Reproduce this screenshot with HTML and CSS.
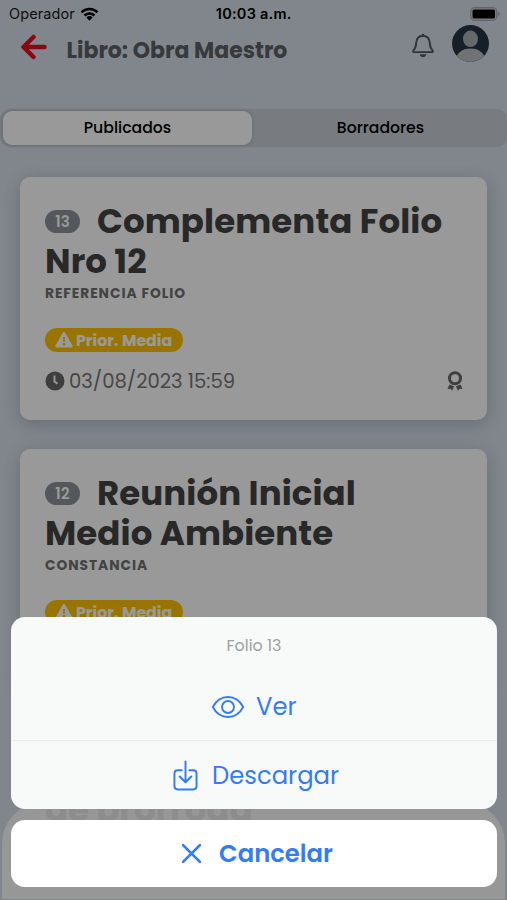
FILE: index.html
```html
<!DOCTYPE html>
<html lang="es">
<head>
<meta charset="utf-8">
<meta name="viewport" content="width=device-width, initial-scale=1">
<title>Libro: Obra Maestro</title>
<link rel="stylesheet" href="styles.css">
</head>
<body>
<svg class="defs" aria-hidden="true">
  <symbol id="warn" viewBox="0 0 18 16"><path fill="currentColor" fill-rule="evenodd" d="M7.8.8a1.4 1.4 0 0 1 2.4 0l7.3 12.7a1.4 1.4 0 0 1-1.2 2.1H1.7a1.4 1.4 0 0 1-1.2-2.1ZM8 5l.3 5h1.4l.3-5ZM9 11a1.3 1.3 0 1 0 0 2.6A1.3 1.3 0 0 0 9 11Z"/></symbol>
</svg>
<div class="screen">
  <div class="status">
    <span class="carrier">Operador</span>
    <svg class="wifi" viewBox="0 0 18 14"><g fill="none" stroke="#000" stroke-width="2.5"><path d="M1 5.3a11.5 11.5 0 0 1 16 0"/><path d="M4 8.5a7.2 7.2 0 0 1 10 0"/></g><path d="M9 13.7 5.9 10.5a4.5 4.5 0 0 1 6.2 0Z"/></svg>
    <span class="clock">10:03 a.m.</span>
    <svg class="battery" viewBox="0 0 30 14"><rect x=".8" y=".8" width="26" height="12.4" rx="3.8" fill="none" stroke="#a5a8ae" stroke-width="1.4"/><rect x="2.5" y="2.5" width="22.6" height="9" rx="1.5"/><path d="M28.2 4.5q1.6 1 1.6 2.5t-1.6 2.5Z" fill="#a5a8ae"/></svg>
  </div>
  <header class="toolbar">
    <svg class="back" viewBox="0 0 28 26"><path d="M13.500 3 3.500 13l10 10M4 13h20.500" fill="none" stroke="#e80d1f" stroke-width="4.500" stroke-linecap="round" stroke-linejoin="round"/></svg>
    <h1>Libro: Obra Maestro</h1>
    <svg class="bell" viewBox="0 0 24 26"><path d="M12 2.700c-4.600.2-6.600 3.400-6.800 7.200-.2 4-1 5.800-2.700 7.500-.7.8-.6 1.700.6 1.700h17.800c1.200 0 1.300-.9.6-1.700-1.700-1.700-2.500-3.500-2.700-7.500-.2-3.800-2.200-7-6.800-7.200Z" fill="none" stroke="#515860" stroke-width="1.900"/><path d="M10.500 2.800a1.500 2 0 0 1 3 0ZM8.700 21.300h6.600q-.7 3-3.300 3t-3.300-3Z" fill="#515860"/></svg>
    <svg class="avatar" viewBox="0 0 37 37"><clipPath id="round"><circle cx="18.500" cy="18.500" r="18.500"/></clipPath><g clip-path="url(#round)"><path fill="#263444" d="M0 0h37v37H0z"/><ellipse cx="18.500" cy="13.800" rx="7.500" ry="8.300" fill="#a9afb1"/><path d="M3 37q2-13.500 15.500-13.500T34 37Z" fill="#bcbfc2"/></g></svg>
  </header>
  <nav class="segment">
    <span class="tab active">Publicados</span>
    <span class="tab">Borradores</span>
  </nav>
  <main class="list">
    <article class="card">
      <h2><span class="num">13</span>Complementa Folio<br>Nro 12</h2>
      <p class="kind">REFERENCIA FOLIO</p>
      <p class="prior"><svg><use href="#warn"/></svg><span>Prior. Media</span></p>
      <div class="meta">
        <svg class="time" viewBox="0 0 20 20"><circle cx="10" cy="10" r="9.500" fill="#686868"/><path d="M9.500 4.500v6l3 2.300" fill="none" stroke="#fff" stroke-width="1.900"/></svg>
        <span class="date">03/08/2023 15:59</span>
        <svg class="ribbon" viewBox="0 0 16 20"><circle cx="8" cy="7.200" r="5.500" fill="none" stroke="#686868" stroke-width="3"/><path fill="#686868" d="m2.500 13.600 4.500 1.600-1.800 4.600-1.700-2-3 .2ZM13.500 13.600 9 15.200l1.800 4.600 1.700-2 3 .2Z"/></svg>
      </div>
    </article>
    <article class="card">
      <h2><span class="num">12</span>Reunión Inicial<br>Medio Ambiente</h2>
      <p class="kind">CONSTANCIA</p>
      <p class="prior"><svg><use href="#warn"/></svg><span>Prior. Media</span></p>
    </article>
  </main>
</div>
<div class="backdrop"></div>
<div class="dock"><span>de prórroga</span></div>
<section class="sheet">
  <div class="group">
    <div class="title">Folio 13</div>
    <div class="action view"><svg viewBox="0 0 34 24"><g fill="none" stroke="currentColor" stroke-width="1.900"><path d="M1.800 12C5 6 10.500 2 17 2s12 4 15.200 10C29 18 23.500 22 17 22S5 18 1.800 12Z"/><circle cx="17" cy="12" r="6"/></g></svg><span>Ver</span></div>
    <div class="action download"><svg viewBox="0 0 26 32"><path d="M9 10.500H5q-3.500 0-3.500 3.500V27q0 3.500 3.500 3.500h16q3.500 0 3.500-3.500V14q0-3.500-3.500-3.500h-4M13 1.500v21M7 17l6 6 6-6" fill="none" stroke="currentColor" stroke-width="2" stroke-linecap="round" stroke-linejoin="round"/></svg><span>Descargar</span></div>
  </div>
  <div class="action cancel"><svg viewBox="0 0 20 20"><path d="m2 2 16 16M18 2 2 18" stroke="currentColor" stroke-width="2.600" stroke-linecap="round"/></svg><span>Cancelar</span></div>
</section>
</body>
</html>
```
FILE: styles.css
```css
* { box-sizing: border-box; margin: 0; padding: 0; }
body { position: relative; width: 507px; height: 900px; overflow: hidden; font-family: Poppins, Inter, sans-serif; white-space: nowrap; background: #d7e0ea; }
svg { display: block; flex: none; }
.defs { position: absolute; width: 0; height: 0; }
.screen { height: 900px; overflow: hidden; background: #d7e0ea; }
.status { display: flex; align-items: center; height: 27px; padding: 0 7px 0 9px; font: 500 14.500px/27px Inter, sans-serif; color: #000; }
.carrier { width: 71px; font-weight: 400; letter-spacing: .1px; color: #181818; }
.wifi { width: 19px; height: 14px; }
.clock { width: 255px; margin-left: 117px; font-weight: 600; letter-spacing: .25px; }
.battery { width: 30px; height: 14px; }
.toolbar { display: flex; height: 82px; padding-left: 20px; }
.back { width: 28px; height: 26px; margin-top: 7px; }
h1 { width: 344px; margin-left: 18.500px; font-size: 22px; line-height: 48px; color: #5c5f64; }
.bell { width: 24px; height: 26px; margin-top: 6px; }
.avatar { width: 37px; height: 37px; margin: -2px 0 0 17.500px; }
.segment { display: flex; height: 38px; padding: 2px 2px 2px 3px; border-radius: 10px; background: #c9ced5; }
.tab { flex: 1; font-size: 15.700px; font-weight: 500; line-height: 34px; text-align: center; color: #000; }
.tab.active { margin-right: 4px; border-radius: 9px; background: #fff; box-shadow: 0 0 4px #8888; }
.list { display: grid; gap: 29px; padding: 30px 19.600px 0 20.400px; }
.card { height: 243px; padding: 24px 25px 0 24.600px; border-radius: 10px; background: #fff; box-shadow: 0 4px 18px #606b7860; }
h2 { height: 80px; font-size: 34px; line-height: 40px; letter-spacing: .1px; color: #444; }
.num { display: inline-block; width: 35px; height: 23px; margin-right: 17px; border-radius: 12px; vertical-align: 6px; font-size: 15px; font-weight: 600; line-height: 24px; text-align: center; color: #fff; background: #8d9198; }
.kind { height: 24px; font-size: 13.800px; font-weight: 700; line-height: 25px; letter-spacing: .95px; color: #707070; }
.prior { display: flex; align-items: center; width: 138px; height: 24px; margin-top: 23px; padding-left: 10px; border-radius: 12px; font-size: 15.800px; font-weight: 700; color: #fff; background: #ffc400; }
.prior svg { width: 18px; height: 16px; margin-right: 3px; }
.meta { display: flex; align-items: center; height: 30px; margin-top: 14px; }
.time { width: 20px; height: 20px; margin-right: 4px; }
.date { font-size: 19.600px; color: #777; }
.ribbon { width: 16px; height: 20px; margin-left: auto; margin-right: -1px; }
.backdrop { position: absolute; inset: 0; background: rgba(0, 0, 0, .4); }
.dock { position: absolute; top: 803px; left: 2px; width: 503px; height: 96px; padding-left: 43px; border-radius: 40px 40px 0 0; font-size: 34px; font-weight: 700; line-height: 12px; color: #8d8d8d; background: #979797; }
.sheet { position: absolute; top: 617px; left: 11px; width: 486px; color: #347cf5; }
.group { height: 192px; margin-bottom: 11px; border-radius: 14px; background: #f8f9f9; overflow: hidden; }
.title { height: 55px; font-size: 15.900px; line-height: 58px; text-align: center; color: #a0a0a0; }
.action { display: flex; align-items: center; height: 69px; font-size: 24.300px; }
.view { border-bottom: 1px solid #eceded; padding: 1px 0 0 200px; }
.view svg { width: 34px; height: 24px; margin-right: 11px; }
.download { height: 68px; padding-left: 162px; }
.download svg { width: 25px; height: 31px; margin-right: 14px; }
.cancel { height: 67px; padding-left: 170px; border-radius: 14px; font-weight: 600; background: #fff; }
.cancel svg { width: 21px; height: 21px; margin-right: 17px; }
```
